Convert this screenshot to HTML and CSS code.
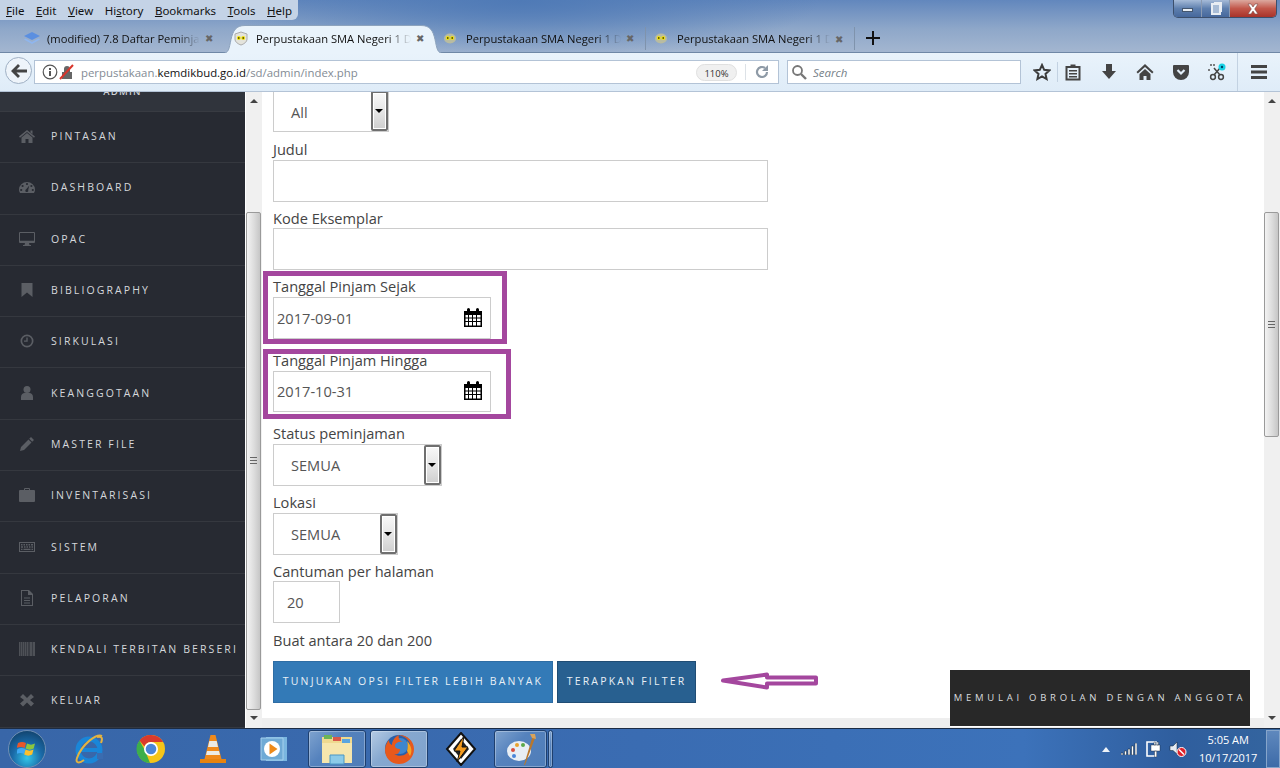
FILE: index.html
```html
<!DOCTYPE html>
<html lang="id">
<head>
  <meta charset="UTF-8" />
  <title>Perpustakaan SMA Negeri 1</title>
  <link rel="stylesheet" href="styles.css">
</head>
<body>
  <header class="browser-top">
    <div class="top-row">
      <nav class="menu-bar">
        <span><u>F</u>ile</span><span><u>E</u>dit</span><span><u>V</u>iew</span><span>Hi<u>s</u>tory</span><span><u>B</u>ookmarks</span><span><u>T</u>ools</span><span><u>H</u>elp</span>
      </nav>
      <div class="win-controls">
        <div class="win-btn win-min"><i></i></div>
        <div class="win-btn win-max"><i></i></div>
        <div class="win-btn win-close">
          <svg width="16" height="12" viewBox="0 0 16 12"><path d="M3 1h3l2 3 2-3h3L9.700 6 13 11h-3L8 8l-2 3H3l3.300-5z" fill="#fff" stroke="#7a4a48" stroke-width=".6"/></svg>
        </div>
      </div>
    </div>
    <div class="tab-row">
      <div class="tab">
        <svg class="tab-icon" width="16" height="14" viewBox="0 0 16 14"><path d="M8 1l8 4-8 4-8-4z" fill="#5b8fe0"/><path d="M1.500 7.500L8 11l6.500-3.500L16 8.500 8 13 0 8.500z" fill="#8fb6ee"/></svg>
        <span class="tab-text">(modified) 7.8 Daftar Peminja</span>
        <span class="tab-close">✖</span>
      </div>
      <div class="tab tab-active">
        <svg class="tab-shape" width="222" height="29" viewBox="0 0 222 29"><path d="M0 29c7 0 7-5 9-14 2-9 5-14 14-14h176c9 0 12 5 14 14 2 9 2 14 9 14z" fill="#e9f3fb" stroke="#8da3bd"/></svg>
        <svg class="tab-icon" width="14" height="15" viewBox="0 0 14 15"><path d="M7 1l6 2v5c0 3-3 5-6 6-3-1-6-3-6-6V3z" fill="#e4e4dc" stroke="#aaa"/><circle cx="4.800" cy="7" r="2" fill="#f2e20a"/><circle cx="9.200" cy="7" r="2" fill="#f2e20a"/><circle cx="4.800" cy="7" r=".8"/><circle cx="9.200" cy="7" r=".8"/></svg>
        <span class="tab-text">Perpustakaan SMA Negeri 1 D</span>
        <span class="tab-close">✖</span>
      </div>
      <div class="tab tab-divided">
        <svg class="tab-icon" width="14" height="15" viewBox="0 0 14 15"><ellipse cx="7" cy="7.500" rx="6" ry="5" fill="#b9bca0"/><circle cx="4.800" cy="7" r="2" fill="#f2e20a"/><circle cx="9.200" cy="7" r="2" fill="#f2e20a"/><circle cx="4.800" cy="7" r=".8"/><circle cx="9.200" cy="7" r=".8"/></svg>
        <span class="tab-text">Perpustakaan SMA Negeri 1 D</span>
        <span class="tab-close">✖</span>
      </div>
      <div class="tab tab-divided tab-last">
        <svg class="tab-icon" width="14" height="15" viewBox="0 0 14 15"><ellipse cx="7" cy="7.500" rx="6" ry="5" fill="#b9bca0"/><circle cx="4.800" cy="7" r="2" fill="#f2e20a"/><circle cx="9.200" cy="7" r="2" fill="#f2e20a"/><circle cx="4.800" cy="7" r=".8"/><circle cx="9.200" cy="7" r=".8"/></svg>
        <span class="tab-text">Perpustakaan SMA Negeri 1 D</span>
        <span class="tab-close">✖</span>
      </div>
      <svg class="new-tab" width="16" height="16" viewBox="0 0 16 16"><path d="M8 1v14M1 8h14" stroke="#111" stroke-width="2"/></svg>
    </div>
  </header>

  <div class="nav-bar">
    <div class="back-btn">
      <svg width="18" height="16" viewBox="0 0 18 16"><path d="M8 1L1 8l7 7 2-2-3.500-3.500H17v-3H6.500L10 3z" fill="#444"/></svg>
    </div>
    <div class="url-box">
      <svg class="url-info" width="16" height="16" viewBox="0 0 16 16"><circle cx="8" cy="8" r="6.800" fill="none" stroke="#555" stroke-width="1.200"/><path d="M7 7h2v5H7zM7 4h2v2H7z" fill="#555"/></svg>
      <svg class="url-lock" width="16" height="16" viewBox="0 0 16 16"><path d="M3 8h10v7H3zM5 8V5a3 3 0 016 0v3" fill="#666"/><path d="M1 15L14 1" stroke="#d9352b" stroke-width="2"/></svg>
      <span class="url-text">perpustakaan.<b>kemdikbud.go.id</b>/sd/admin/index.php</span>
      <span class="zoom-pill">110%</span>
      <i class="url-sep"></i>
      <svg class="reload" width="16" height="16" viewBox="0 0 16 16"><path d="M13 8a5 5 0 11-2-4" fill="none" stroke="#8e9aa6" stroke-width="2.200"/><path d="M14 1v6H8z" fill="#8e9aa6"/></svg>
    </div>
    <div class="search-box">
      <svg width="16" height="16" viewBox="0 0 16 16"><circle cx="6.500" cy="6.500" r="4.500" fill="none" stroke="#777" stroke-width="1.800"/><path d="M10 10l5 5" stroke="#777" stroke-width="2.400"/></svg>
      <span>Search</span>
    </div>
    <div class="tool-icons">
      <svg class="t-star" width="18" height="18" viewBox="0 0 18 18"><path d="M9 2l2.200 4.800 5.200.6-3.900 3.500 1.100 5.100L9 13.400 4.400 16l1.100-5.100L1.600 7.400l5.200-.6z" fill="none" stroke="#3c3c3c" stroke-width="2"/></svg>
      <i class="tool-sep"></i>
      <svg class="t-clip" width="16" height="18" viewBox="0 0 16 18"><path d="M1.500 4h13v12.500h-13z" fill="none" stroke="#444" stroke-width="2"/><path d="M5.500 1.500h5V4h-5zM4 7h8v1.500H4zM4 10h8v1.500H4zM4 13h8v1.500H4z" fill="#444"/></svg>
      <svg class="t-down" width="16" height="18" viewBox="0 0 16 18"><path d="M5 1h6v7h4l-7 8-7-8h4z" fill="#444"/></svg>
      <svg class="t-home" width="18" height="18" viewBox="0 0 18 18"><path d="M9 1l8.500 8-1.300 1.500L9 4 1.800 10.500.5 9zM3.500 11L9 6l5.500 5v6H10.500v-4h-3v4h-4z" fill="#444"/></svg>
      <svg class="t-pocket" width="18" height="18" viewBox="0 0 18 18"><path d="M2 2h14a1 1 0 011 1v6a8 8 0 01-16 0V3a1 1 0 011-1z" fill="#444"/><path d="M5.500 7L9 10.500 12.500 7" fill="none" stroke="#e4eff9" stroke-width="2.200"/></svg>
      <svg class="t-ext" width="18" height="20" viewBox="0 0 18 20"><circle cx="5" cy="15" r="2.400" fill="none" stroke="#444" stroke-width="1.500"/><circle cx="13" cy="15" r="2.400" fill="none" stroke="#444" stroke-width="1.500"/><path d="M6 13l6-7M12 13L6 6" stroke="#444" stroke-width="1.500"/><path d="M2 3h6M1 7v3" stroke="#555" stroke-width="1.500" stroke-dasharray="2 1"/><circle cx="14" cy="5" r="3.500" fill="#19d2e6"/><circle cx="14" cy="5" r="1.200" fill="#046"/></svg>
      <i class="tool-sep tool-sep-last"></i>
      <svg class="t-menu" width="16" height="14" viewBox="0 0 16 14"><path d="M0 0h16v3H0zM0 5.500h16v3H0zM0 11h16v3H0z" fill="#444"/></svg>
    </div>
  </div>

  <main class="app">
    <aside class="sidebar">
      <div class="side-head"><span>ADMIN</span></div>
      <ul class="side-menu">
        <li><svg viewBox="0 0 16 16"><path d="M8 2l8 6.500-1 1.200L8 4 1 9.700 0 8.500zM2.500 9.500L8 5l5.500 4.500V15H9.500v-4h-3v4h-4zM11.500 2.500h2V6l-2-1.600z"/></svg><span>PINTASAN</span></li>
        <li><svg viewBox="0 0 16 16"><path fill-rule="evenodd" d="M0 10.500A8 7.500 0 0116 10.500c0 1.500-.4 2.700-1.100 3.500H1.100C.4 13.200 0 12 0 10.500zM8 3.900a1.100 1.100 0 100 2.200 1.100 1.100 0 000-2.200zM3.600 5.900a1.100 1.100 0 100 2.200 1.100 1.100 0 000-2.200zM12.400 5.900a1.100 1.100 0 100 2.200 1.100 1.100 0 000-2.200zM2.200 9.900a1.100 1.100 0 100 2.200 1.100 1.100 0 000-2.200zM13.800 9.900a1.100 1.100 0 100 2.200 1.100 1.100 0 000-2.200zM10.300 6.500L7.200 10.200a1.500 1.500 0 102 .8z"/></svg><span>DASHBOARD</span></li>
        <li><svg viewBox="0 0 16 14" class="side-wide"><path fill-rule="evenodd" d="M1 0h14a1 1 0 011 1v9a1 1 0 01-1 1h-5l.5 2H12v1H4v-1h1.500L6 11H1a1 1 0 01-1-1V1a1 1 0 011-1zM1 1v7.500h14V1z"/><path d="M1 1h14v7.500H1z" fill="#272a32"/></svg><span>OPAC</span></li>
        <li><svg viewBox="0 0 16 16"><path d="M2.500 1h11v14L8 10.500 2.500 15z"/></svg><span>BIBLIOGRAPHY</span></li>
        <li><svg viewBox="0 0 16 16"><path fill-rule="evenodd" d="M8 1.500a6.500 6.500 0 110 13 6.500 6.500 0 010-13zM8 3.200a4.800 4.800 0 100 9.600 4.800 4.800 0 000-9.600zM7.300 4.500h1.400v4.200H5v-1.300h2.300z"/></svg><span>SIRKULASI</span></li>
        <li><svg viewBox="0 0 16 16"><circle cx="8" cy="4.500" r="3.500"/><path d="M2 15v-3c0-2.500 2-4 3.500-4h5c1.500 0 3.500 1.500 3.500 4v3z"/></svg><span>KEANGGOTAAN</span></li>
        <li><svg viewBox="0 0 16 16"><path d="M12 1l3 3-1.800 1.800-3-3zM9.500 3.500l3 3L5 14 1 15l1-4z"/></svg><span>MASTER FILE</span></li>
        <li><svg viewBox="0 0 16 14" class="side-wide"><path fill-rule="evenodd" d="M5 2V1a1 1 0 011-1h4a1 1 0 011 1v1h4a1 1 0 011 1v10a1 1 0 01-1 1H1a1 1 0 01-1-1V3a1 1 0 011-1zM6 1v1h4V1z"/></svg><span>INVENTARISASI</span></li>
        <li><svg viewBox="0 0 16 10" class="side-wide"><path fill-rule="evenodd" d="M0 0h16v10H0zM1 1v8h14V1zM2 2h1.500v1.500H2zM4.500 2H6v1.500H4.500zM7 2h1.500v1.500H7zM9.500 2H11v1.500H9.500zM12 2h2v1.500h-2zM2 4.300h2v1.500H2zM5 4.300h1.500v1.500H5zM7.500 4.300H9v1.500H7.500zM10 4.300h1.500v1.500H10zM12.500 4.300H14v1.500h-1.500zM2 6.700h1.500v1.300H2zM4.500 6.700h7v1.300h-7zM12.500 6.700H14v1.300h-1.500z"/></svg><span>SISTEM</span></li>
        <li><svg viewBox="0 0 16 16"><path fill-rule="evenodd" d="M2 0h8l4 4v12H2zM3 1v14h10V5H9V1zM5 7.500h6v1H5zM5 10h6v1H5zM5 12.500h6v1H5z"/></svg><span>PELAPORAN</span></li>
        <li><svg viewBox="0 0 16 12" class="side-wide side-barcode" preserveAspectRatio="none"><path d="M0 0h1.500v12H0zM2 0h1v12H2zM3.500 0h2v12h-2zM6 0h1v12H6zM7.500 0h1.500v12H7.500zM9.500 0h1v12h-1zM11 0h2v12h-2zM13.500 0H16v12h-2.500z"/></svg><span>KENDALI TERBITAN BERSERI</span></li>
        <li><svg viewBox="0 0 16 16"><path d="M4 2l4 4 4-4 3 3-4 3 4 3.500-3 3-4-4-4 4-3-3L5 8 1 5z"/></svg><span>KELUAR</span></li>
      </ul>
    </aside>

    <div class="scrollbar scrollbar-left">
      <span class="arrow-up"></span>
      <div class="thumb thumb-left"><i></i></div>
      <span class="arrow-down"></span>
    </div>

    <section class="content">
      <form class="filter-form">
        <div class="select select-all"><span>All</span><b></b></div>

        <div class="field field-judul">
          <label>Judul</label>
          <div class="input input-wide"></div>
        </div>
        <div class="field">
          <label>Kode Eksemplar</label>
          <div class="input input-wide"></div>
        </div>
        <div class="field">
          <label>Tanggal Pinjam Sejak</label>
          <div class="input input-date">
            <span>2017-09-01</span>
            <svg width="20" height="20" viewBox="0 0 20 20"><use href="#cal"/></svg>
          </div>
          <i class="mark mark-from"></i>
        </div>
        <div class="field field-spaced">
          <label>Tanggal Pinjam Hingga</label>
          <div class="input input-date">
            <span>2017-10-31</span>
            <svg width="20" height="20" viewBox="0 0 20 20"><use href="#cal"/></svg>
          </div>
          <i class="mark mark-to"></i>
        </div>
        <div class="field field-spaced">
          <label>Status peminjaman</label>
          <div class="select select-status"><span>SEMUA</span><b></b></div>
        </div>
        <div class="field">
          <label>Lokasi</label>
          <div class="select select-lokasi"><span>SEMUA</span><b></b></div>
        </div>
        <div class="field">
          <label>Cantuman per halaman</label>
          <div class="input input-num"><span>20</span></div>
        </div>
        <p class="help">Buat antara 20 dan 200</p>
        <div class="actions">
          <button type="button" class="btn btn-more">TUNJUKAN OPSI FILTER LEBIH BANYAK</button>
          <button type="button" class="btn btn-apply">TERAPKAN FILTER</button>
          <svg class="hand-arrow" width="100" height="20" viewBox="0 0 100 20"><path d="M3 9.500L47 3.500V6.500H96V12.500H47V16.500z" fill="#fff" stroke="#a4479e" stroke-width="4" stroke-linejoin="round"/></svg>
        </div>
      </form>
      <div class="h-strip"></div>
    </section>

    <div class="scrollbar scrollbar-right">
      <span class="arrow-up"></span>
      <div class="thumb thumb-right"><i></i></div>
      <span class="arrow-down"></span>
    </div>

    <div class="chat-box">MEMULAI OBROLAN DENGAN ANGGOTA</div>
  </main>

  <footer class="taskbar">
    <div class="orb">
      <svg width="20" height="20" viewBox="0 0 20 20"><path d="M1 4c3-1.500 5-1.500 8 0l-1.300 5c-3-1.500-5-1.500-8 0z" fill="#e8572a"/><path d="M10 4.500c3 1.500 5 1.500 8 0l-1.300 5c-3 1.500-5 1.500-8 0z" fill="#8cc63f"/><path d="M-.500 10c3-1.500 5-1.500 8 0l-1.300 5c-3-1.500-5-1.500-8 0z" fill="#3fa9f5" transform="translate(1)"/><path d="M8.500 10.500c3 1.500 5 1.500 8 0l-1.300 5c-3 1.500-5 1.500-8 0z" fill="#fbc02d"/></svg>
    </div>
    <div class="pinned pin-ie">
      <svg width="34" height="34" viewBox="0 0 34 34"><circle cx="17" cy="18" r="11" fill="none" stroke="#1a86d8" stroke-width="5"/><path d="M7 18h20" stroke="#1a86d8" stroke-width="4"/><path d="M25 24h6" stroke="#3a6cb0" stroke-width="6"/><path d="M30 4C25 1 10 12 5 26c-2 6 3 5 7 2" fill="none" stroke="#e3b341" stroke-width="2"/><path d="M25 5c5-1 6 1 4 6" fill="none" stroke="#e3b341" stroke-width="2"/></svg>
    </div>
    <div class="pinned pin-chrome">
      <svg width="30" height="30" viewBox="0 0 30 30"><circle cx="15" cy="15" r="14" fill="#f5c518"/><path d="M15 1a14 14 0 0112.100 7H15a7 7 0 00-6.500 4.500L3.500 6.500A14 14 0 0115 1z" fill="#d93a2b"/><path d="M3.500 6.500l5.500 10 5 12.500A14 14 0 013.500 6.500z" fill="#3cae4b"/><circle cx="15" cy="15" r="7" fill="#fff"/><circle cx="15" cy="15" r="5.300" fill="#4a86d8"/></svg>
    </div>
    <div class="pinned pin-vlc">
      <svg width="28" height="32" viewBox="0 0 28 32"><path d="M11.500 2h5l6 24h-17z" fill="#f08a1c"/><path d="M10.300 8h7.400l1.300 6H9zM8 18h12l1 4H7z" fill="#ecebe6"/><path d="M1 26h26v4H1z" fill="#e8830f"/></svg>
    </div>
    <div class="pinned pin-wmp">
      <svg width="28" height="28" viewBox="0 0 28 28"><path d="M6 2h21v24H6z" fill="#7ab6e0"/><path d="M1 3h22v22H1z" fill="#6faad6" stroke="#a5d0ec"/><circle cx="12" cy="14" r="8" fill="#fff"/><path d="M9.500 8.500l8 5.500-8 5.500z" fill="#ee8a1a"/></svg>
    </div>
    <div class="task-btn task-folder">
      <svg width="34" height="32" viewBox="0 0 34 32"><path d="M2 4h30v24H2z" fill="#efd98f"/><path d="M4 2h8v4H4z" fill="#6cb557"/><path d="M13 4h8v4h-8z" fill="#d9584a"/><path d="M22 6h8v4h-8z" fill="#5aa5e0"/><path d="M2 10h30v20H2z" fill="#f6e6ad"/><path d="M10 22h14v9H10z" fill="#8ccbe8" stroke="#4a97c4"/></svg>
    </div>
    <div class="task-btn task-firefox">
      <svg width="32" height="32" viewBox="0 0 32 32"><circle cx="16" cy="16" r="14" fill="#2a5fa8"/><circle cx="17" cy="13" r="8" fill="#3f86cf"/><path d="M16 2c8 0 15 6 15 14s-6 15-15 15C8 31 2 25 2 17c0-4 2-8 4-10 0 3 1 4 3 5 0-3 2-8 7-10-1 3 0 5 4 7-4-1-8 1-8 4 0 2 2 3 5 3 0 4-3 6-6 5 6 4 15 1 16-7 1-5-3-10-11-12z" fill="#e8591c"/><path d="M24 8c4 4 6 10 3 15l-3-5c1-4 1-7 0-10z" fill="#f6a623"/></svg>
    </div>
    <div class="pinned pin-winamp">
      <svg width="32" height="34" viewBox="0 0 32 34"><path d="M16 1l14 16-14 16L2 17z" fill="#fff" stroke="#111" stroke-width="2"/><path d="M8 17L16 7l8 10-8 10z" fill="#222"/><path d="M19 4L9 19h6l-3 11 11-15h-6z" fill="#f29a1f" stroke="#111"/></svg>
    </div>
    <div class="task-btn task-paint">
      <svg width="32" height="34" viewBox="0 0 32 34"><ellipse cx="14" cy="19" rx="12" ry="10" fill="#e8eef4"/><circle cx="8" cy="18" r="2" fill="#d94f3d"/><circle cx="12" cy="13" r="2" fill="#e9a22f"/><circle cx="18" cy="13" r="2" fill="#5aa84a"/><circle cx="9" cy="24" r="2" fill="#4a86d8"/><path d="M28 3l2 3-10 27h-1z" fill="#b9772c"/><path d="M25 2h5l1 5-4-1z" fill="#d9a35a"/></svg>
    </div>
    <div class="task-btn task-sliver"></div>
    <div class="tray">
      <span class="tray-up"></span>
      <svg class="tray-signal" width="16" height="12" viewBox="0 0 16 12"><path d="M0 10h2v2H0zM3.500 8h2v4h-2zM7 6h2v6H7zM10.500 3h2v9h-2zM14 0h2v12h-2z" fill="#fff" stroke="#123" stroke-width=".5"/></svg>
      <svg class="tray-plug" width="16" height="18" viewBox="0 0 16 18"><path d="M1 2h9v14H1z" fill="none" stroke="#fff" stroke-width="1.600"/><path d="M5 5h9v6H5zM8 2h1.500v3H8zM11 2h1.500v3H11zM8.500 11h2v6h-2z" fill="#fff" stroke="#123" stroke-width=".4"/></svg>
      <svg class="tray-sound" width="18" height="16" viewBox="0 0 18 16"><path d="M1 5h3l4-4v12L4 9.500H1z" fill="#e6ecf3" stroke="#123" stroke-width=".5"/><circle cx="12.500" cy="11" r="4.500" fill="#e0202a" stroke="#fff"/><path d="M10 8.500l5 5" stroke="#fff" stroke-width="1.500"/></svg>
      <div class="clock"><span>5:05 AM</span><span>10/17/2017</span></div>
      <div class="show-desktop"></div>
    </div>
  </footer>

  <svg class="defs" width="0" height="0">
    <symbol id="cal" viewBox="0 0 20 20">
      <path fill="#000" fill-rule="evenodd" d="M1 3h3V1.500a1.500 1.500 0 013 0V3h6V1.500a1.500 1.500 0 013 0V3h3v16H1zM2.500 7v2.500H5V7zM6 7v2.500h3V7zM10 7v2.500h3V7zM14 7v2.500h3.500V7zM2.500 10.500V13H5v-2.500zM6 10.500V13h3v-2.500zM10 10.500V13h3v-2.500zM14 10.500V13h3.500v-2.500zM2.500 14v3.500H5V14zM6 14v3.500h3V14zM10 14v3.500h3V14zM14 14v3.500h3.500V14z"/>
    </symbol>
  </svg>
</body>
</html>
```

FILE: styles.css
```css
* {
  box-sizing: border-box;
}

html, body {
  margin: 0;
  height: 768px;
  overflow: hidden;
}

body {
  display: flex;
  flex-direction: column;
  width: 1280px;
  font-family: "Open Sans", "Noto Sans", sans-serif;
  color: #333;
  background: #fff;
}

.defs {
  position: absolute;
}

/* window frame */
.browser-top {
  height: 53px;
  flex: none;
  background:
    radial-gradient(ellipse 300px 60px at 520px 0, #4f7ab6 0, rgba(79, 122, 182, 0) 100%),
    linear-gradient(180deg, #6287bd 0, #8ea7c9 55%, #a3b6d0 100%);
  border-bottom: 1px solid #6f88a6;
}

.top-row {
  display: flex;
  justify-content: space-between;
  height: 24px;
}

.menu-bar {
  display: flex;
  gap: 11.500px;
  height: 20px;
  width: 298px;
  padding: 0 0 0 6px;
  align-items: center;
  font-family: "Noto Sans", "Open Sans", sans-serif;
  font-size: 11.500px;
  color: #111;
  background: #c4d3e6;
  border-radius: 0 0 6px 0;
}

.win-controls {
  display: flex;
  height: 18px;
  margin-right: 3px;
  border: 1px solid #3c4f6c;
  border-top: 0;
  border-radius: 0 0 5px 5px;
  overflow: hidden;
}

.win-btn {
  display: flex;
  align-items: center;
  justify-content: center;
  height: 100%;
  border-right: 1px solid #8a9ab2;
}

.win-min, .win-max {
  width: 28px;
  background: linear-gradient(180deg, #a6bbd8 0, #5e7fae 50%, #46689c 100%);
}

.win-min i {
  display: block;
  width: 11px;
  height: 4px;
  margin-top: 2px;
  background: #e8edf3;
  border: 1px solid #44566e;
}

.win-max i {
  display: block;
  width: 10px;
  height: 12px;
  background: #a8bcd6;
  border: 2px solid #e8edf3;
  box-shadow: 2px -2px 0 -1px #e8edf3;
}

.win-close {
  width: 46px;
  border: 0;
  background: linear-gradient(180deg, #dca99f 0, #c2574a 50%, #a8332a 100%);
}

.tab-row {
  display: flex;
  align-items: stretch;
  height: 28px;
  padding-left: 10px;
}

.tab {
  position: relative;
  display: flex;
  align-items: center;
  width: 212px;
  padding: 0 6px 0 14px;
  font-size: 11.200px;
  color: #111;
}

.tab-active {
  padding: 0 8px 0 12px;
  width: 213px;
}

.tab-active .tab-icon {
  margin-right: 8px;
}

.tab-active > svg:not(.tab-shape), .tab-active > span {
  position: relative;
}

.tab-shape {
  position: absolute;
  left: 0;
  top: 0;
  height: 30px;
}

.tab-divided {
  width: 210px;
  padding: 0 8px;
}

.tab-divided .tab-icon {
  margin-right: 9px;
}

.tab-last {
  border-left: 1px solid #7f93ac;
  border-right: 1px solid #7f93ac;
  margin: 3px 0 2px;
}

.tab-icon {
  flex: none;
  margin-right: 7px;
}

.tab-text {
  flex: 1;
  min-width: 0;
  white-space: nowrap;
  -webkit-mask-image: linear-gradient(90deg, #000 85%, transparent 100%);
  mask-image: linear-gradient(90deg, #000 85%, transparent 100%);
}

.tab-close {
  width: 14px;
  margin-left: 2px;
  font-size: 10px;
  color: #666;
  text-align: center;
}

.new-tab {
  align-self: center;
  margin-left: 10px;
}

/* toolbar */
.nav-bar {
  position: relative;
  display: flex;
  align-items: center;
  flex: none;
  height: 39px;
  padding-left: 34px;
  background: linear-gradient(180deg, #e9f3fb 0, #dfecf8 100%);
  border-bottom: 1px solid #b3c3d6;
}

.back-btn {
  position: absolute;
  left: 5px;
  top: 4px;
  display: flex;
  align-items: center;
  justify-content: center;
  width: 27px;
  height: 27px;
  background: #eef4fa;
  border: 1px solid #9fb0c4;
  border-radius: 50%;
}

.url-box {
  display: flex;
  align-items: center;
  width: 745px;
  height: 24px;
  padding: 0 8px 0 7px;
  background: #fff;
  border: 1px solid #b3c3d6;
}

.url-lock {
  margin-left: 1px;
}

.url-text {
  flex: 1;
  margin-left: 6px;
  font-size: 11.400px;
  color: #838b94;
}

.url-text b {
  font-weight: 400;
  color: #111;
}

.zoom-pill {
  width: 41px;
  height: 17px;
  font-size: 9.500px;
  line-height: 17px;
  text-align: center;
  background: #f0f0f0;
  border: 1px solid #e0e0e0;
  border-radius: 9px;
}

.url-sep {
  width: 1px;
  height: 16px;
  margin: 0 8px;
  background: #dde2e7;
}

.search-box {
  display: flex;
  align-items: center;
  gap: 6px;
  width: 234px;
  height: 24px;
  margin-left: 8px;
  padding-left: 3px;
  font-size: 11.500px;
  font-style: italic;
  color: #767f88;
  background: #fff;
  border: 1px solid #b3c3d6;
}

.tool-icons {
  display: flex;
  align-items: center;
  flex: 1;
  height: 100%;
  padding-left: 12px;
}

.t-clip { margin-left: 7px; }
.t-down { margin-left: 20px; }
.t-home { margin-left: 19px; }
.t-pocket { margin-left: 18px; }
.t-ext { margin-left: 18px; }
.t-menu { margin-left: 13px; }

.tool-sep {
  width: 1px;
  height: 20px;
  margin-left: 6px;
  background: #c3d2e2;
}

.tool-sep-last {
  height: 38px;
  margin-left: 11px;
}

/* page */
.app {
  position: relative;
  display: flex;
  flex: none;
  height: 636px;
  overflow: hidden;
}

.sidebar {
  flex: none;
  width: 245px;
  background: #272a32;
  overflow: hidden;
}

.side-head {
  display: flow-root;
  height: 20px;
  background: #30343c;
  border-bottom: 1px solid #383b42;
  text-align: center;
}

.side-head span {
  display: block;
  margin-top: -7px;
  font-size: 9.500px;
  font-weight: 600;
  line-height: 13px;
  letter-spacing: 1.200px;
  color: #cfd2d6;
}

.side-menu {
  margin: 0;
  padding: 0;
  list-style: none;
}

.side-menu li {
  display: flex;
  align-items: center;
  height: 51.300px;
  padding: 0 0 2px 19px;
  border-bottom: 1px solid #35383f;
}

.side-menu svg {
  flex: none;
  width: 16px;
  height: 16px;
  margin-right: 16px;
  fill: #5b5e64;
}

.side-menu .side-wide {
  width: 16px;
  height: 14px;
}

.side-menu .side-barcode {
  opacity: .75;
}

.side-menu span {
  font-size: 10.500px;
  letter-spacing: 2.100px;
  white-space: nowrap;
  color: #d5d8dc;
}

.scrollbar {
  position: relative;
  flex: none;
  width: 17px;
  height: 100%;
  background: #f0f0f0;
}

.scrollbar-left {
  border-left: 1px solid #fff;
}

.scrollbar-right {
  width: 16px;
}

.arrow-up, .arrow-down {
  position: absolute;
  left: 50%;
  margin-left: -4px;
  border: 4px solid transparent;
}

.arrow-up {
  top: 3px;
  border-bottom-color: #444;
}

.arrow-down {
  top: 624px;
  border-top-color: #444;
}

.thumb {
  position: absolute;
  top: 120px;
  left: 0;
  width: 15px;
  background: linear-gradient(90deg, #f3f3f3 0, #dcdcdc 55%, #c6c6c6 100%);
  border: 1px solid #9a9a9a;
  border-radius: 2px;
}

.thumb-left {
  height: 498px;
}

.thumb-right {
  height: 225px;
}

.thumb i {
  position: absolute;
  top: 50%;
  left: 3px;
  width: 7px;
  height: 7px;
  margin-top: -4px;
  border-top: 1px solid #666;
  border-bottom: 1px solid #666;
  background: linear-gradient(180deg, transparent 33%, #666 33%, #666 66%, transparent 66%);
}

.content {
  display: flex;
  flex-direction: column;
  flex: 1;
  min-width: 0;
  background: #fff;
  font-size: 14.600px;
}

.filter-form {
  flex: 1;
  margin-top: -2px;
  padding-left: 11px;
}

.field {
  position: relative;
}

.field label {
  display: block;
  height: 26.800px;
  padding-top: 5px;
  line-height: 22px;
  color: #444;
}

.field-judul {
  margin-top: 1.200px;
}

.field-spaced {
  padding-top: 5px;
}

.input, .select {
  position: relative;
  display: flex;
  align-items: center;
  height: 41.800px;
  background: #fff;
  border: 1px solid #ccc;
  color: #555;
}

.input-wide { width: 495px; }
.input-date {
  justify-content: space-between;
  width: 218px;
  padding: 0 7px 0 3px;
}
.input-num {
  width: 67px;
  padding-left: 13px;
}

.select {
  padding-left: 17px;
}

.select b {
  position: absolute;
  right: 0;
  top: 0;
  bottom: 0;
  width: 17px;
  background: linear-gradient(180deg, #f8f8f8 0, #e6e6e6 50%, #cfcfcf 100%);
  border: 2px solid #6f6f6f;
  border-radius: 2px;
  box-shadow: inset 0 0 0 1px #fff;
}

.select b::after {
  content: "";
  position: absolute;
  left: 2px;
  top: 16px;
  border: 4.500px solid transparent;
  border-top: 4.500px solid #000;
  border-bottom: 0;
}

.select-all {
  width: 116px;
  padding-top: 2px;
}
.select-status { width: 169px; }
.select-lokasi { width: 125px; }

.mark {
  position: absolute;
  border: 5px solid #a4479e;
  pointer-events: none;
}

.mark-from {
  top: 1px;
  left: -10px;
  width: 244px;
  height: 73px;
}

.mark-to {
  top: 10px;
  left: -10px;
  width: 248px;
  height: 70px;
}

.help {
  margin: 6px 0 0;
  height: 22px;
  line-height: 22px;
  color: #444;
}

.actions {
  display: flex;
  align-items: flex-start;
  gap: 4px;
  margin-top: 10px;
}

.btn {
  height: 42px;
  padding: 0 0 2px;
  font-family: inherit;
  font-size: 10.500px;
  letter-spacing: 2.200px;
  color: #e8f0f6;
  border: 1px solid #2e6da4;
  background: #337ab7;
}

.btn-more { width: 280px; }

.btn-apply {
  width: 139px;
  background: #286090;
  border-color: #204d74;
}

.hand-arrow {
  margin: 10px 0 0 20px;
}

.h-strip {
  flex: none;
  height: 10px;
  background: #eee;
}

.chat-box {
  position: absolute;
  left: 950px;
  top: 578px;
  width: 300px;
  height: 57px;
  padding-top: 21px;
  font-size: 9.500px;
  line-height: 14px;
  letter-spacing: 3.750px;
  text-align: center;
  white-space: nowrap;
  color: #d8dcdf;
  background: #282828;
  border-bottom: 1px solid #fff;
}

/* windows taskbar */
.taskbar {
  position: relative;
  display: flex;
  align-items: stretch;
  flex: 1;
  padding-top: 1px;
  background: linear-gradient(90deg, #3866a8 0, #3a6cb2 50%, #3c72ba 80%, #2f5e9e 92%, #34659f 100%);
  border-top: 1px solid #1c2c44;
}

.orb {
  display: flex;
  align-items: center;
  justify-content: center;
  width: 38px;
  height: 38px;
  margin-left: 8px;
  border-radius: 50%;
  background: radial-gradient(circle at 50% 75%, #33c6e8 0, #1a6aa8 45%, #0f3558 100%);
  border: 1px solid #6f8fb3;
}

.pinned {
  display: flex;
  align-items: center;
  justify-content: center;
  flex: none;
}

.pin-ie { width: 62px; margin-left: 12px; }
.pin-chrome { width: 62px; }
.pin-vlc { width: 62px; }
.pin-wmp { width: 60px; }
.pin-winamp { width: 66px; }

.task-btn {
  display: flex;
  align-items: center;
  justify-content: center;
  flex: none;
  height: 38px;
  border: 1px solid #1e3f6e;
  border-radius: 3px;
  box-shadow: inset 0 0 0 1px rgba(255, 255, 255, .3);
  background: linear-gradient(135deg, #7fa3cf 0, #5582bd 40%, #4f7db8 100%);
}

.task-folder { width: 58px; margin-left: 4px; }
.task-firefox {
  width: 58px;
  margin-left: 4px;
  background: linear-gradient(135deg, #b5cbe4 0, #86a8d0 40%, #7fa2cc 100%);
}
.task-paint { width: 53px; }
.task-sliver { width: 5px; margin-left: 1px; }

.tray {
  position: relative;
  display: flex;
  align-items: center;
  flex: 1;
  padding-left: 549px;
  color: #fff;
}

.tray-up {
  width: 0;
  height: 0;
  border: 4px solid transparent;
  border-bottom: 5px solid #eef3f8;
  border-top: 0;
}

.tray-signal { margin-left: 11px; }
.tray-plug { margin-left: 9px; }
.tray-sound { margin-left: 7px; }

.clock {
  display: flex;
  flex-direction: column;
  align-items: center;
  margin-left: 12px;
  font-size: 11px;
  line-height: 18px;
}

.show-desktop {
  position: absolute;
  right: 0;
  top: 0;
  bottom: 0;
  width: 14px;
  background: linear-gradient(180deg, #5f88bd 0, #3d6ba8 100%);
  border: 1px solid #86a5cb;
}
```
